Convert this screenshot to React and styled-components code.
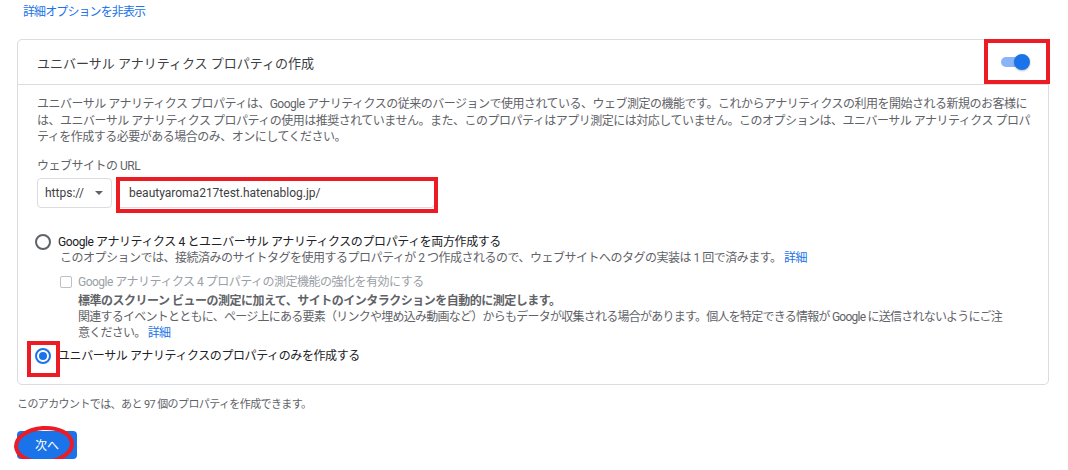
import React from "react";
import styled, { createGlobalStyle } from "styled-components";

const GlobalStyle = createGlobalStyle`
  body {
    margin: 0;
    background: #ffffff;
    font-family: Roboto, "Noto Sans CJK JP", sans-serif;
  }
`;

const RED = "#ec1c24";
const BLUE = "#1a73e8";

export default function App() {
  return (
    <>
      <GlobalStyle />
      <Page>
        <TopLink href="#">詳細オプションを非表示</TopLink>

        <Card>
          <CardHeader>
            <Title>ユニバーサル アナリティクス プロパティの作成</Title>
            <Switch>
              <Track />
              <Thumb />
              <Highlight $top={-15} $left={-17} $w={66} $h={45} />
            </Switch>
          </CardHeader>

          <CardBody>
            <Paragraph>
              ユニバーサル アナリティクス プロパティは、Google アナリティクスの従来のバージョンで使用されている、ウェブ測定の機能です。これからアナリティクスの利用を開始される新規のお客様に
              <br />
              は、ユニバーサル アナリティクス プロパティの使用は推奨されていません。また、このプロパティはアプリ測定には対応していません。このオプションは、ユニバーサル アナリティクス プロパ
              <br />
              ティを作成する必要がある場合のみ、オンにしてください。
            </Paragraph>

            <FieldLabel>ウェブサイトの URL</FieldLabel>
            <UrlRow>
              <Select>
                <span>https://</span>
                <svg width="8" height="4" viewBox="0 0 8 4">
                  <path d="M0 0h8L4 4z" fill="#5f6368" />
                </svg>
              </Select>
              <UrlInput>
                beautyaroma217test.hatenablog.jp/
                <Highlight $top={-2} $left={-2} $w={322} $h={36} />
              </UrlInput>
            </UrlRow>

            <RadioGroup>
              <RadioRow>
                <Radio />
                <span>Google アナリティクス 4 とユニバーサル アナリティクスのプロパティを両方作成する</span>
              </RadioRow>
              <Indented $indent={25}>
                <Note>
                  このオプションでは、接続済みのサイトタグを使用するプロパティが 2 つ作成されるので、ウェブサイトへのタグの実装は 1 回で済みます。 <Link href="#">詳細</Link>
                </Note>
              </Indented>

              <Indented $indent={25} $top={8}>
                <CheckRow>
                  <Checkbox />
                  <span>Google アナリティクス 4 プロパティの測定機能の強化を有効にする</span>
                </CheckRow>
              </Indented>
              <Indented $indent={43} $top={3}>
                <Note $bold>標準のスクリーン ビューの測定に加えて、サイトのインタラクションを自動的に測定します。</Note>
                <Note $tight>
                  関連するイベントとともに、ページ上にある要素（リンクや埋め込み動画など）からもデータが収集される場合があります。個人を特定できる情報が Google に送信されないようにご注
                  <br />
                  意ください。 <Link href="#">詳細</Link>
                </Note>
              </Indented>

              <RadioRow $top={7}>
                <RadioSpot>
                  <Radio $checked />
                  <Highlight $top={-7} $left={-8} $w={33} $h={36} />
                </RadioSpot>
                <span>ユニバーサル アナリティクスのプロパティのみを作成する</span>
              </RadioRow>
            </RadioGroup>
          </CardBody>
        </Card>

        <Footer>このアカウントでは、あと 97 個のプロパティを作成できます。</Footer>

        <ButtonSpot>
          <NextButton>次へ</NextButton>
          <Circle width="62" height="40" viewBox="0 0 62 40">
            <ellipse cx="30" cy="20" rx="28" ry="17" fill="none" stroke={RED} strokeWidth="4" transform="rotate(-4 30 20)" />
          </Circle>
        </ButtonSpot>
      </Page>
    </>
  );
}

const Page = styled.div`
  padding: 4px 19px 0 17px;
`;

const TopLink = styled.a`
  display: block;
  margin-left: 6px;
  font-size: 12px;
  line-height: 16px;
  letter-spacing: -0.9px;
  color: ${BLUE};
  text-decoration: none;
`;

const Card = styled.section`
  margin-top: 19px;
  border: 1px solid #dadce0;
  border-radius: 5px;
`;

const CardHeader = styled.div`
  height: 44px;
  display: flex;
  align-items: center;
  justify-content: space-between;
  padding: 0 18px 0 19px;
  border-bottom: 1px solid #dadce0;
`;

const Title = styled.h2`
  margin: 0;
  font-size: 13px;
  font-weight: 400;
  letter-spacing: 0;
  color: #3c4043;
`;

const Switch = styled.div`
  position: relative;
  width: 29px;
  height: 16px;
`;

const Track = styled.div`
  position: absolute;
  left: 0;
  top: 3px;
  width: 26px;
  height: 10px;
  border-radius: 5px;
  background: #8ab4f8;
`;

const Thumb = styled.div`
  position: absolute;
  right: 0;
  top: 0;
  width: 16px;
  height: 16px;
  border-radius: 50%;
  background: ${BLUE};
  box-shadow: 0 1px 2px rgba(0, 0, 0, 0.25);
`;

const Highlight = styled.div`
  position: absolute;
  top: ${(p) => p.$top}px;
  left: ${(p) => p.$left}px;
  width: ${(p) => p.$w}px;
  height: ${(p) => p.$h}px;
  box-sizing: border-box;
  border: 4px solid ${RED};
  pointer-events: none;
`;

const CardBody = styled.div`
  padding: 11px 18px 20px 19px;
`;

const Paragraph = styled.p`
  margin: 0;
  font-size: 12px;
  line-height: 16.5px;
  letter-spacing: -0.5px;
  color: #5f6368;
  white-space: nowrap;
`;

const FieldLabel = styled.div`
  margin-top: 12px;
  font-size: 12px;
  line-height: 16px;
  letter-spacing: -0.5px;
  color: #5f6368;
`;

const UrlRow = styled.div`
  display: flex;
  gap: 5px;
  margin-top: 4px;
`;

const Select = styled.div`
  width: 75px;
  height: 30px;
  box-sizing: border-box;
  display: flex;
  align-items: center;
  justify-content: space-between;
  padding: 0 8px 0 7px;
  border: 1px solid #dadce0;
  border-radius: 4px;
  font-size: 12px;
  color: #3c4043;
`;

const UrlInput = styled.div`
  position: relative;
  width: 318px;
  height: 30px;
  box-sizing: border-box;
  display: flex;
  align-items: center;
  padding-left: 11px;
  border: 1px solid #dadce0;
  border-radius: 4px;
  font-size: 12px;
  color: #3c4043;
`;

const RadioGroup = styled.div`
  margin: 26px 0 0 -2px;
`;

const RadioRow = styled.div`
  display: flex;
  align-items: center;
  gap: 7px;
  margin-top: ${(p) => p.$top || 0}px;
  font-size: 12px;
  line-height: 16px;
  letter-spacing: -0.4px;
  color: #202124;
`;

const RadioSpot = styled.div`
  position: relative;
  display: flex;
`;

const Radio = styled.span`
  width: 16px;
  height: 16px;
  box-sizing: border-box;
  display: flex;
  align-items: center;
  justify-content: center;
  border: 2px solid ${(p) => (p.$checked ? BLUE : "#5f6368")};
  border-radius: 50%;

  &::after {
    content: "";
    display: ${(p) => (p.$checked ? "block" : "none")};
    width: 8px;
    height: 8px;
    border-radius: 50%;
    background: ${BLUE};
  }
`;

const Indented = styled.div`
  padding-left: ${(p) => p.$indent}px;
  margin-top: ${(p) => p.$top || 0}px;
`;

const Note = styled.div`
  font-size: 12px;
  line-height: 16px;
  letter-spacing: ${(p) => (p.$tight ? -0.75 : -0.5)}px;
  font-weight: ${(p) => (p.$bold ? 700 : 400)};
  color: #5f6368;
  white-space: nowrap;
`;

const Link = styled.a`
  color: ${BLUE};
  text-decoration: none;
`;

const CheckRow = styled.div`
  display: flex;
  align-items: center;
  gap: 6px;
  font-size: 12px;
  line-height: 16px;
  letter-spacing: -0.5px;
  color: #9aa0a6;
`;

const Checkbox = styled.span`
  width: 12px;
  height: 12px;
  box-sizing: border-box;
  border: 1.5px solid #bdc1c6;
  border-radius: 2px;
`;

const Footer = styled.div`
  margin-top: 12px;
  font-size: 11px;
  line-height: 16px;
  letter-spacing: -0.6px;
  color: #5f6368;
`;

const ButtonSpot = styled.div`
  position: relative;
  margin-top: 18px;
  width: 60px;
`;

const NextButton = styled.button`
  width: 60px;
  height: 28px;
  border: none;
  border-radius: 4px;
  background: ${BLUE};
  color: #ffffff;
  font-family: Roboto, "Noto Sans CJK JP", sans-serif;
  font-size: 12px;
  cursor: pointer;
`;

const Circle = styled.svg`
  position: absolute;
  left: -3px;
  top: -6px;
  pointer-events: none;
`;
